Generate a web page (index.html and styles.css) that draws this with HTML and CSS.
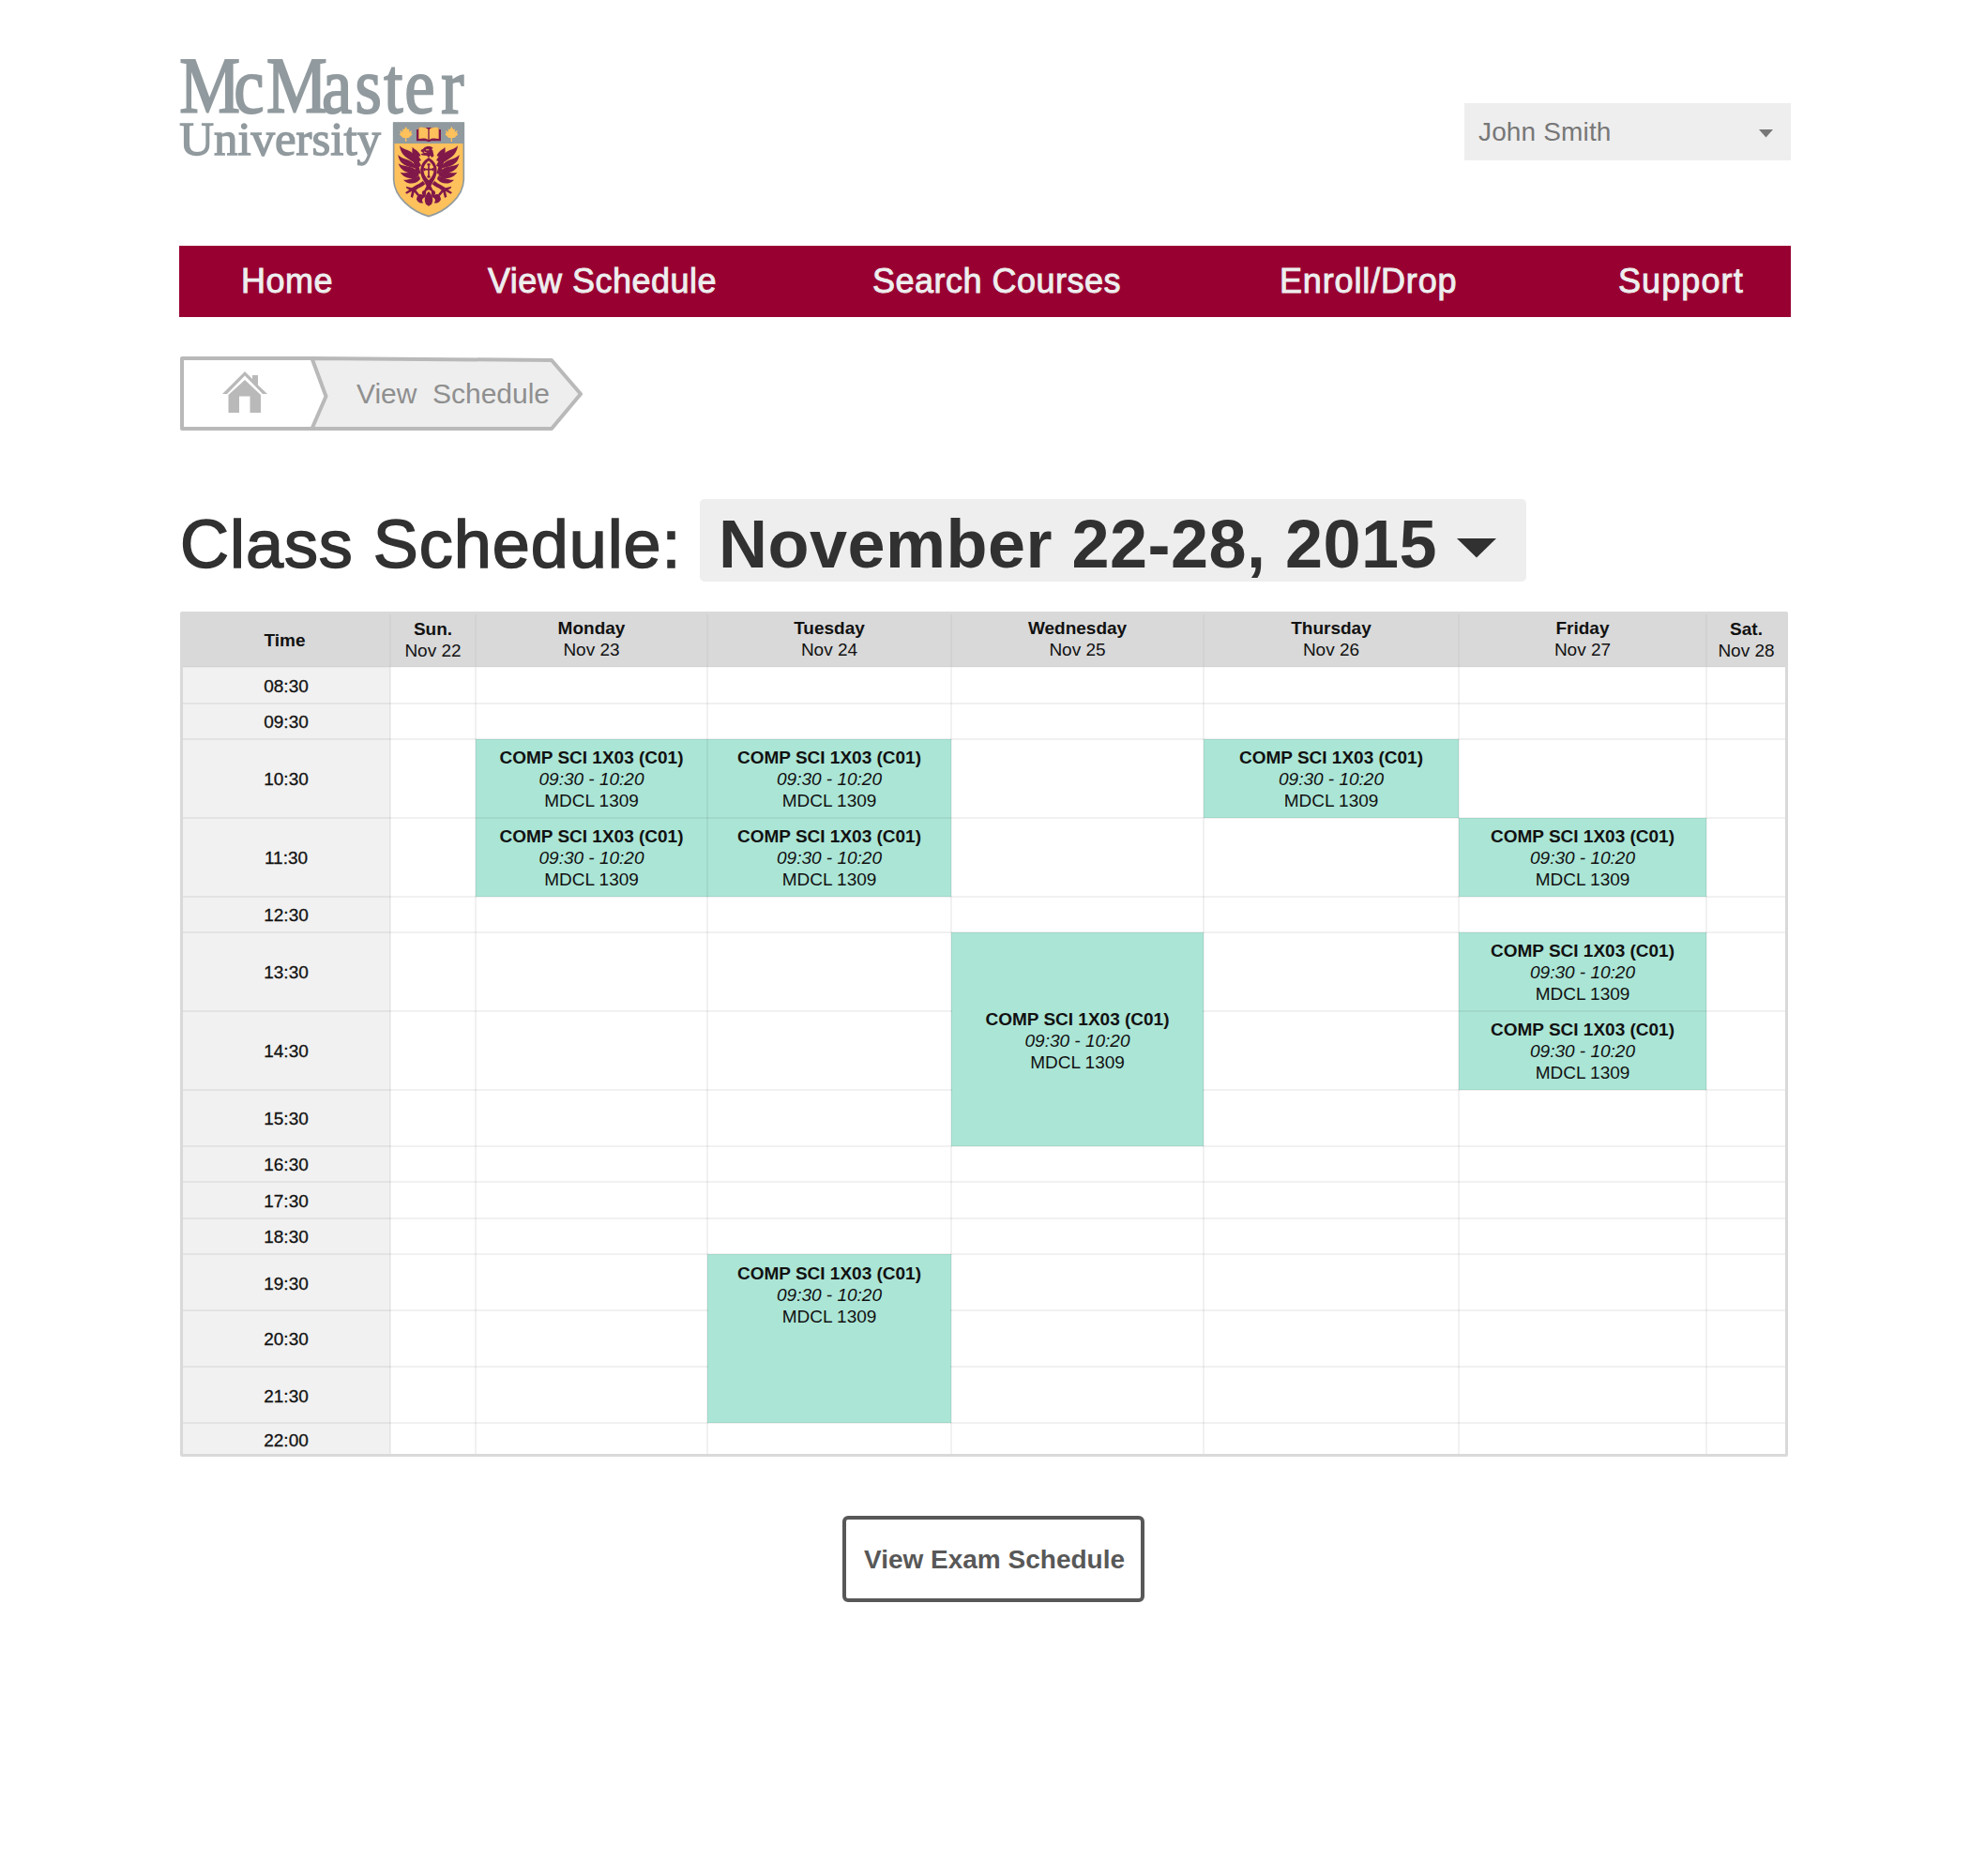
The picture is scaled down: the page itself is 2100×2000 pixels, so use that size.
FILE: index.html
```html
<!DOCTYPE html>
<html lang="en">
<head>
<meta charset="utf-8">
<title>McMaster University - Class Schedule</title>
<link rel="stylesheet" href="styles.css">
</head>
<body>
<div class="page">
  <header class="header">
    <svg class="logo" viewBox="33 30 927 519" role="img" aria-label="McMaster University">
      <g class="logo-name" transform="translate(33 210) scale(.86 1)">
        <text x="1 203 324 530 654 761 838 974" y="0">McMaster</text>
      </g>
      <text class="logo-sub" x="34" y="345" font-size="152" textLength="644" lengthAdjust="spacingAndGlyphs">University</text>
      <path class="shield" d="M719 244H943V425C941 480 885 527 831 542C777 527 721 480 719 425Z"/>
      <path class="shield-band" d="M717 241H945V309H717Z"/>
      <g class="gold">
        <path id="leaf" d="M758 255L764 265L769 262L768 272L777 267L775 276L779 280L767 291L760 291V303H756V291L749 291L737 280L741 276L739 267L748 272L747 262L752 265Z"/>
        <use href="#leaf" x="146"/>
      </g>
      <path class="maroon" d="M792 264H798V258H864V264H870V301H840L831 304L822 301H792Z"/>
      <path class="gold" d="M799 258C812 256 824 257 829 264V297C822 291 810 292 799 294ZM863 258C850 256 838 257 833 264V297C840 291 852 292 863 294Z"/>
      <g class="maroon">
        <g id="wing">
          <path d="M738 316C752 332 776 328 783 347L794 378C775 360 742 354 738 316Z"/>
          <path d="M733 345C747 361 770 358 783 373L795 389C772 385 737 381 733 345Z"/>
          <path d="M734 373C750 384 772 381 786 390L797 399C776 408 744 404 734 373Z"/>
          <path d="M740 401C757 406 777 399 798 402L800 411C785 426 754 423 740 401Z"/>
          <path d="M750 425C768 427 782 416 801 413L804 423C790 440 765 442 750 425Z"/>
          <path d="M779 320C787 330 802 333 805 349L799 350L807 363L800 366L807 380L800 384L806 406L791 405C789 383 774 356 779 320Z"/>
          <path d="M812 428C804 438 790 440 777 451L758 446L761 453L769 457L756 466L761 470L777 461L773 479L780 483L785 464L796 478L801 472L790 458C800 449 812 448 820 439Z"/>
          <path d="M823 459C812 456 806 466 812 474C802 466 793 476 792 488C797 498 806 501 814 499C806 491 811 483 821 480Z"/>
        </g>
        <use href="#wing" transform="translate(1662 0) scale(-1 1)"/>
        <path d="M815 324C823 316 839 317 845 323L840 327C847 332 844 339 848 348L841 354L836 347L831 355L826 349C822 347 812 350 805 343L815 340L808 335C804 333 806 328 811 328Z"/>
        <path d="M831 354C856 367 867 397 846 430L838 445L848 465L831 457L814 465L824 445L816 430C795 397 806 367 831 354Z"/>
        <path d="M831 462C842 474 848 488 840 503L831 509L822 503C814 488 820 474 831 462Z"/>
      </g>
      <path class="gold" d="M831 364C852 380 854 405 831 427C808 405 810 380 831 364Z"/>
      <path class="cross" d="M831 373V419M814 392H848M826 376H836M826 415H836M817 387V397M845 387V397"/>
      <path class="gold" d="M822 328H832V331H822ZM815 334L827 339L817 338Z"/>
    </svg>
    <button class="user"><span>John Smith</span>
      <svg width="15" height="9" viewBox="0 0 15 9"><path d="M0 0H15L7.5 8.5Z"/></svg>
    </button>
  </header>

  <nav class="nav">
    <a>Home</a><a>View Schedule</a><a>Search Courses</a><a class="wide">Enroll/Drop</a><a class="wider">Support</a>
  </nav>

  <svg class="crumbs" width="430" height="84" viewBox="191 378 430 84">
    <path class="crumb-line crumb-home" d="M332.5 382H194V457H332.5"/>
    <path class="crumb-line crumb-here" d="M332.5 382L588 384L619 420L588 457H332.5L347.5 422.5Z"/>
    <path class="house" d="M237 420L261 396L269 404V400H275V410.500L285 420H280L261 400.500L242 420Z"/>
    <path class="house" d="M243.500 421L261 405L278 421V440H266.500V422.500H255V440H243.500Z"/>
    <text class="crumb-text" x="380" y="430" textLength="206">View  Schedule</text>
  </svg>

  <h1 class="title">
    <span class="title-label">Class Schedule:</span>
    <button class="week"><span>November 22-28, 2015</span>
      <svg width="42" height="21" viewBox="0 0 42 21"><path d="M0 0H42L21 20.500Z"/></svg>
    </button>
  </h1>

  <div class="board">
    <table class="schedule">
      <colgroup><col class="c-time"><col class="c-sun"><col class="c-mon"><col class="c-tue"><col class="c-wed"><col class="c-thu"><col class="c-fri"><col class="c-sat"></colgroup>
      <thead>
        <tr class="h56"><th class="corner">Time</th><th class="short">Sun.<small>Nov 22</small></th><th>Monday<small>Nov 23</small></th><th>Tuesday<small>Nov 24</small></th><th>Wednesday<small>Nov 25</small></th><th>Thursday<small>Nov 26</small></th><th>Friday<small>Nov 27</small></th><th class="short">Sat.<small>Nov 28</small></th></tr>
      </thead>
      <tbody>
        <tr class="h39"><th>08:30</th><td></td><td></td><td></td><td></td><td></td><td></td><td></td></tr>
        <tr class="h38"><th>09:30</th><td></td><td></td><td></td><td></td><td></td><td></td><td></td></tr>
        <tr class="h84"><th>10:30</th><td></td><td class="class"><b>COMP SCI 1X03 (C01)</b><i>09:30 - 10:20</i>MDCL 1309</td><td class="class"><b>COMP SCI 1X03 (C01)</b><i>09:30 - 10:20</i>MDCL 1309</td><td></td><td class="class"><b>COMP SCI 1X03 (C01)</b><i>09:30 - 10:20</i>MDCL 1309</td><td></td><td></td></tr>
        <tr class="h84"><th>11:30</th><td></td><td class="class"><b>COMP SCI 1X03 (C01)</b><i>09:30 - 10:20</i>MDCL 1309</td><td class="class"><b>COMP SCI 1X03 (C01)</b><i>09:30 - 10:20</i>MDCL 1309</td><td></td><td></td><td class="class"><b>COMP SCI 1X03 (C01)</b><i>09:30 - 10:20</i>MDCL 1309</td><td></td></tr>
        <tr class="h38"><th>12:30</th><td></td><td></td><td></td><td></td><td></td><td></td><td></td></tr>
        <tr class="h84"><th>13:30</th><td></td><td></td><td></td><td class="class long" rowspan="3"><b>COMP SCI 1X03 (C01)</b><i>09:30 - 10:20</i>MDCL 1309</td><td></td><td class="class"><b>COMP SCI 1X03 (C01)</b><i>09:30 - 10:20</i>MDCL 1309</td><td></td></tr>
        <tr class="h84"><th>14:30</th><td></td><td></td><td></td><td></td><td class="class"><b>COMP SCI 1X03 (C01)</b><i>09:30 - 10:20</i>MDCL 1309</td><td></td></tr>
        <tr class="h60"><th>15:30</th><td></td><td></td><td></td><td></td><td></td><td></td></tr>
        <tr class="h38"><th>16:30</th><td></td><td></td><td></td><td></td><td></td><td></td><td></td></tr>
        <tr class="h39"><th>17:30</th><td></td><td></td><td></td><td></td><td></td><td></td><td></td></tr>
        <tr class="h38"><th>18:30</th><td></td><td></td><td></td><td></td><td></td><td></td><td></td></tr>
        <tr class="h60"><th class="late">19:30</th><td></td><td></td><td class="class evening" rowspan="3"><b>COMP SCI 1X03 (C01)</b><i>09:30 - 10:20</i>MDCL 1309</td><td></td><td></td><td></td><td></td></tr>
        <tr class="h60"><th>20:30</th><td></td><td></td><td></td><td></td><td></td><td></td></tr>
        <tr class="h60"><th class="late">21:30</th><td></td><td></td><td></td><td></td><td></td><td></td></tr>
        <tr class="h33"><th class="late">22:00</th><td></td><td></td><td></td><td></td><td></td><td></td><td></td></tr>
      </tbody>
    </table>
  </div>

  <button class="exam">View Exam Schedule</button>
</div>
</body>
</html>
```
FILE: styles.css
```css
* { box-sizing: border-box; }

body {
  margin: 0;
  background: #fff;
  font-family: "Liberation Sans", Arial, sans-serif;
  color: #313131;
}

button {
  margin: 0;
  border: 0;
  font-family: inherit;
  color: inherit;
}

.page {
  width: 1718px;
  margin-left: 191px;
  padding-top: 60px;
}

/* header */
.header {
  display: flex;
  justify-content: space-between;
  align-items: flex-start;
  height: 202px;
}

.logo { width: 309px; height: 173px; overflow: visible; }
.logo text { font-family: "Liberation Serif", "Times New Roman", serif; fill: #919a9e; stroke: #919a9e; stroke-width: 6; }
.logo-name { font-size: 254px; }
.logo .logo-sub { stroke-width: 4; }
.shield { fill: #fec15c; stroke: #919a9e; stroke-width: 5; }
.shield-band { fill: #919a9e; }
.gold { fill: #fec15c; }
.maroon { fill: #80184a; }
.cross { fill: none; stroke: #80184a; stroke-width: 5; }

.user {
  display: flex;
  justify-content: space-between;
  align-items: center;
  width: 348px;
  height: 61px;
  margin-top: 50px;
  padding: 0 19px 0 15px;
  background: #eee;
  color: #777;
  font-size: 28px;
  letter-spacing: .15px;
}
.user svg { fill: #777; margin-top: 4px; }

/* navigation */
.nav {
  display: grid;
  grid-template-columns: 263px 410px 434px 361px 1fr;
  height: 76px;
  padding-left: 66px;
  background: #980032;
  color: #eee;
  font-size: 36px;
  line-height: 76px;
  letter-spacing: .5px;
  -webkit-text-stroke: .9px #eee;
}
.nav .wide { letter-spacing: .85px; }
.nav .wider { letter-spacing: 1.1px; }

/* breadcrumb */
.crumbs { display: block; margin-top: 40px; }
.crumb-line { stroke: #b9b9b9; stroke-width: 4; stroke-linejoin: round; }
.crumb-home { fill: #fff; }
.crumb-here { fill: #eee; }
.house { fill: #b9b9b9; }
.crumb-text { font-size: 30px; fill: #8f8f8f; white-space: pre; }

/* title */
.title {
  display: flex;
  margin: 70px 0 0;
  height: 88px;
  font-size: 72px;
  font-weight: 400;
  line-height: 80px;
}
.title-label {
  width: 555px;
  padding: 8px 0 0 1px;
  white-space: nowrap;
  letter-spacing: .95px;
  -webkit-text-stroke: 1.6px #313131;
}
.week {
  display: flex;
  align-items: center;
  width: 881px;
  padding: 8px 32px 0 20px;
  border-radius: 5px;
  background: #eee;
  font-size: 72px;
  font-weight: 700;
  line-height: 80px;
  letter-spacing: .48px;
  white-space: nowrap;
  justify-content: space-between;
}
.week svg { fill: #313131; margin-top: 8px; }

/* schedule */
.board {
  width: 1714px;
  height: 901px;
  margin: 32px 0 0 1px;
  border: 3px solid #d9d9d9;
  border-radius: 2px;
  overflow: hidden;
}
.schedule {
  width: 1708px;
  table-layout: fixed;
  border-collapse: collapse;
  border-style: hidden;
  color: #111;
  font-size: 19px;
  line-height: 23px;
  text-align: center;
}
.schedule th, .schedule td {
  padding: 0;
  border: 2px solid rgba(0, 0, 0, .055);
}
.schedule thead th { background: #d9d9d9; border-color: rgba(0, 0, 0, .03); padding-bottom: 4px; }
.schedule thead .short { padding-bottom: 1px; }
.schedule thead .corner { padding: 0 3px 1px 0; }
.schedule small { display: block; font-size: 19px; font-weight: 400; }
.schedule tbody th { background: #f1f1f1; font-weight: 400; padding-top: 1px; -webkit-text-stroke: .3px #111; }
.schedule tbody .late { padding-top: 3px; }
.schedule .class { background: #abe5d6; }
.schedule b, .schedule i { display: block; }
.schedule .long { padding-top: 2px; }
.schedule .evening { vertical-align: top; padding-top: 8px; }

.c-time { width: 221px; }
.c-sun { width: 91px; }
.c-mon { width: 247px; }
.c-tue { width: 260px; }
.c-wed { width: 269px; }
.c-thu { width: 272px; }
.c-fri { width: 264px; }
.c-sat { width: 84px; }

.h33 { height: 33px; }
.h38 { height: 38px; }
.h39 { height: 39px; }
.h56 { height: 56px; }
.h60 { height: 60px; }
.h84 { height: 84px; }

.exam {
  display: block;
  width: 322px;
  height: 92px;
  margin: 63px 0 0 707px;
  padding: 1px 0 0 2px;
  border: 4px solid #585858;
  border-radius: 6px;
  background: #fff;
  color: #585858;
  font-size: 28px;
  font-weight: 700;
}
```
